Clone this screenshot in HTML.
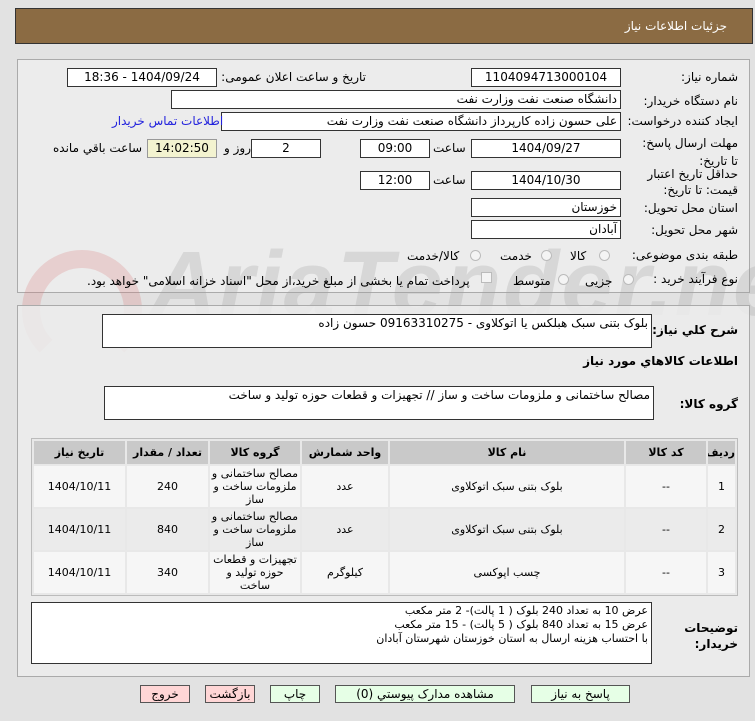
<!DOCTYPE html>
<html><head><meta charset="utf-8"><style>
*{box-sizing:border-box;margin:0;padding:0}
body{width:755px;height:721px;background:#e2e2e2;font-family:"DejaVu Sans","Liberation Sans",sans-serif;font-size:11px;color:#000;position:relative;overflow:hidden}
.a{position:absolute;white-space:nowrap}
.r{direction:rtl}
.box{position:absolute;background:#fff;border:1px solid #333;direction:rtl;padding:1px 3px;white-space:nowrap;overflow:hidden;font-size:12px;line-height:15px}
.c{text-align:center}
.lbl{position:absolute;direction:rtl;text-align:right;font-size:12px;white-space:nowrap}
.panel{position:absolute;left:17px;width:733px;border:1px solid #aaa;background:#ececec}
table{border-collapse:separate;border-spacing:2px;table-layout:fixed}
td,th{text-align:center;font-size:11px;overflow:hidden}
th{background:#c9c9c9;height:23px;font-weight:bold}
.btn{position:absolute;top:685px;height:18px;border:1px solid #555;font-size:12px;text-align:center;line-height:16px;direction:rtl;background:#e6ffe6}
.red{background:#ffd6d6}
.rad{display:inline-block;width:11px;height:11px;border:1px solid #bbb;border-radius:50%;background:#f4f4f4;vertical-align:middle}
</style></head><body>
<div class="a" style="left:15px;top:8px;width:738px;height:36px;background:#8b6b43;border:1px solid #333"></div>
<div class="a r" style="right:28px;top:19px;color:#fff;font-size:12px">جزئیات اطلاعات نیاز</div>

<div class="panel" style="top:59px;height:234px"></div>
<div class="a" style="left:22px;top:250px;width:120px;height:120px;border:18px solid rgba(215,120,120,0.25);border-radius:50%;border-bottom-color:transparent"></div>
<div class="a" style="left:150px;top:232px;font-size:92px;font-weight:bold;font-style:italic;color:rgba(160,160,160,0.28);font-family:'Liberation Sans',sans-serif;letter-spacing:2px">AriaTender.net</div>

<div class="lbl" style="right:17px;top:70px">شماره نیاز:</div>
<div class="box c" style="left:471px;top:68px;width:150px;height:19px">1104094713000104</div>
<div class="lbl" style="right:389px;top:70px">تاریخ و ساعت اعلان عمومی:</div>
<div class="box c" style="left:67px;top:68px;width:150px;height:19px">1404/09/24 - 18:36</div>

<div class="lbl" style="right:17px;top:94px">نام دستگاه خریدار:</div>
<div class="box" style="left:171px;top:90px;width:450px;height:19px">دانشگاه صنعت نفت وزارت نفت</div>

<div class="lbl" style="right:17px;top:114px">ایجاد کننده درخواست:</div>
<div class="box" style="left:221px;top:112px;width:400px;height:19px">علی حسون زاده کارپرداز دانشگاه صنعت نفت وزارت نفت</div>
<div class="lbl" style="left:112px;top:114px;color:#2222dd">اطلاعات تماس خریدار</div>

<div class="lbl" style="right:17px;top:134px;line-height:18px;white-space:normal;width:100px">مهلت ارسال پاسخ: تا تاریخ:</div>
<div class="box c" style="left:471px;top:139px;width:150px;height:19px">1404/09/27</div>
<div class="lbl" style="left:433px;top:141px">ساعت</div>
<div class="box c" style="left:360px;top:139px;width:70px;height:19px">09:00</div>
<div class="box c" style="left:251px;top:139px;width:70px;height:19px">2</div>
<div class="lbl" style="left:224px;top:141px">روز و</div>
<div class="box c" style="left:147px;top:139px;width:70px;height:19px;background:#f3f3d0;border-color:#999">14:02:50</div>
<div class="lbl" style="left:53px;top:141px">ساعت باقي مانده</div>

<div class="lbl" style="right:17px;top:166px;line-height:16px;white-space:normal;width:100px">حداقل تاریخ اعتبار قیمت: تا تاریخ:</div>
<div class="box c" style="left:471px;top:171px;width:150px;height:19px">1404/10/30</div>
<div class="lbl" style="left:433px;top:173px">ساعت</div>
<div class="box c" style="left:360px;top:171px;width:70px;height:19px">12:00</div>

<div class="lbl" style="right:17px;top:201px">استان محل تحویل:</div>
<div class="box" style="left:471px;top:198px;width:150px;height:19px">خوزستان</div>
<div class="lbl" style="right:17px;top:223px">شهر محل تحویل:</div>
<div class="box" style="left:471px;top:220px;width:150px;height:19px">آبادان</div>

<div class="lbl" style="right:17px;top:248px">طبقه بندی موضوعی:</div>
<div class="lbl" style="left:570px;top:249px">كالا</div><span class="a rad" style="left:599px;top:250px"></span>
<div class="lbl" style="left:500px;top:249px">خدمت</div><span class="a rad" style="left:541px;top:250px"></span>
<div class="lbl" style="left:407px;top:249px">كالا/خدمت</div><span class="a rad" style="left:470px;top:250px"></span>

<div class="lbl" style="right:17px;top:272px">نوع فرآیند خرید :</div>
<div class="lbl" style="left:585px;top:274px">جزیی</div><span class="a rad" style="left:623px;top:274px"></span>
<div class="lbl" style="left:513px;top:274px">متوسط</div><span class="a rad" style="left:558px;top:274px"></span>
<span class="a" style="left:481px;top:272px;width:11px;height:11px;border:1px solid #bbb;background:#f4f4f4"></span>
<div class="lbl" style="left:87px;top:274px">پرداخت تمام یا بخشی از مبلغ خرید،از محل "اسناد خزانه اسلامی" خواهد بود.</div>

<div class="panel" style="top:305px;height:372px;background:rgba(236,236,236,0.85)"></div>
<div class="lbl" style="right:17px;top:323px;font-weight:bold">شرح کلي نياز:</div>
<div class="box" style="left:102px;top:314px;width:550px;height:34px">بلوک بتنی سبک هبلکس یا اتوکلاوی - 09163310275 حسون زاده</div>
<div class="lbl" style="right:17px;top:354px;font-weight:bold">اطلاعات کالاهاي مورد نياز</div>
<div class="lbl" style="right:17px;top:397px;font-weight:bold">گروه کالا:</div>
<div class="box" style="left:104px;top:386px;width:550px;height:34px">مصالح ساختمانی و ملزومات ساخت و ساز // تجهیزات و قطعات حوزه تولید و ساخت</div>

<div class="a" style="left:31px;top:438px;width:707px;height:158px;border:1px solid #bbb;background:#e8e8e8">
<table style="direction:rtl;width:705px">
<tr><th style="width:27px">ردیف</th><th style="width:80px">کد کالا</th><th style="width:234px">نام کالا</th><th style="width:86px">واحد شمارش</th><th style="width:90px">گروه کالا</th><th style="width:81px">تعداد / مقدار</th><th>تاریخ نیاز</th></tr>
<tr style="background:#f6f6f6;height:41px"><td>1</td><td>--</td><td>بلوک بتنی سبک اتوکلاوی</td><td>عدد</td><td style="line-height:13px;white-space:normal">مصالح ساختمانی و ملزومات ساخت و ساز</td><td>240</td><td>1404/10/11</td></tr>
<tr style="background:#ebebeb;height:41px"><td>2</td><td>--</td><td>بلوک بتنی سبک اتوکلاوی</td><td>عدد</td><td style="line-height:13px;white-space:normal">مصالح ساختمانی و ملزومات ساخت و ساز</td><td>840</td><td>1404/10/11</td></tr>
<tr style="background:#f6f6f6;height:41px"><td>3</td><td>--</td><td>چسب اپوکسی</td><td>کیلوگرم</td><td style="line-height:13px;white-space:normal">تجهیزات و قطعات حوزه تولید و ساخت</td><td>340</td><td>1404/10/11</td></tr>
</table></div>

<div class="lbl" style="right:17px;top:620px;font-weight:bold;line-height:16px">توضیحات<br>خریدار:</div>
<div class="box" style="left:31px;top:602px;width:621px;height:62px;font-size:11px;line-height:14px">عرض 10 به تعداد 240 بلوک ( 1 پالت)- 2 متر مکعب<br>عرض 15 به تعداد 840 بلوک ( 5 پالت) - 15 متر مکعب<br>با احتساب هزینه ارسال به استان خوزستان شهرستان آبادان</div>

<div class="btn" style="left:531px;width:99px">پاسخ به نیاز</div>
<div class="btn" style="left:335px;width:180px">مشاهده مدارک پیوستي (0)</div>
<div class="btn" style="left:270px;width:50px">چاپ</div>
<div class="btn red" style="left:205px;width:50px">بازگشت</div>
<div class="btn red" style="left:140px;width:50px">خروج</div>
</body></html>
